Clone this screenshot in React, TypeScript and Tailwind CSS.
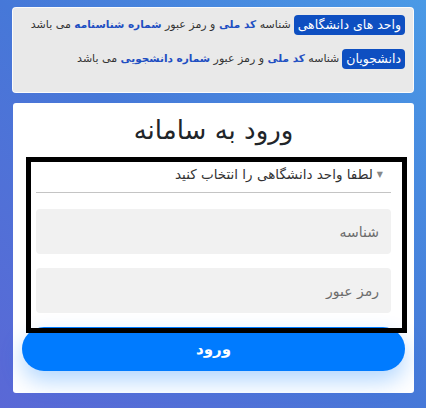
import React from "react";

const font = { fontFamily: '"DejaVu Sans", "Noto Sans", sans-serif' };

function InfoRow({ badge, children }: { badge: string; children: React.ReactNode }) {
  return (
    <div className="flex items-center gap-[3px]">
      <span className="rounded-[4px] bg-[#0e4fc1] px-[4px] h-[20px] flex items-center text-[12.5px] text-white leading-none">
        {badge}
      </span>
      <span className="text-[11px] text-[#333]">{children}</span>
    </div>
  );
}

function Hl({ children }: { children: React.ReactNode }) {
  return <b className="text-[#1f4fc2] font-bold text-[10.5px]">{children}</b>;
}

export default function App() {
  return (
    <div
      dir="rtl"
      style={font}
      className="w-[426px] h-[408px] overflow-hidden bg-gradient-to-tr from-[#5a68d6] via-[#4678d8] to-[#4a9ae6] px-[12px] pt-[7px]"
    >
      <div className="h-[86px] rounded-[4px] border border-white/80 bg-[#e9e9e9] pr-[8px] pt-[7px] flex flex-col gap-[14px]">
        <InfoRow badge="واحد های دانشگاهی">
          شناسه <Hl>کد ملی</Hl> و رمز عبور <Hl>شماره شناسنامه</Hl> می باشد
        </InfoRow>
        <InfoRow badge="دانشجویان">
          شناسه <Hl>کد ملی</Hl> و رمز عبور <Hl>شماره دانشجویی</Hl> می باشد
        </InfoRow>
      </div>

      <div className="relative mt-[10px] h-[290px] w-[401px] rounded-[3px] bg-white">
        <h1 className="h-[54px] flex items-center justify-center text-[26px] text-[#212529]">
          ورود به سامانه
        </h1>

        <div className="mx-[23px]">
          <div className="h-[36px] flex items-center gap-[4px] border-b border-[#c4c4c4] pr-[8px] text-[13.5px] text-[#333]">
            <span className="text-[8px] text-[#888]">▼</span>
            <span>لطفا واحد دانشگاهی را انتخاب کنید</span>
          </div>

          <input
            placeholder="شناسه"
            className="mt-[16px] block h-[45px] w-full rounded-[4px] bg-[#f1f1f1] px-[12px] text-[14px] text-[#333] placeholder:text-[#6c6c6c] outline-none"
          />
          <input
            placeholder="رمز عبور"
            className="mt-[14px] block h-[45px] w-full rounded-[4px] bg-[#f1f1f1] px-[12px] text-[14px] text-[#333] placeholder:text-[#6c6c6c] outline-none"
          />

          <button className="mt-[14px] mx-[-14px] w-[383px] h-[44px] rounded-full bg-[#007bff] text-white text-[15px] font-bold shadow-[0_10px_22px_rgba(0,123,255,0.3)]">
            ورود
          </button>
        </div>

        <div className="pointer-events-none absolute left-[13px] top-[54px] h-[176px] w-[381px] border-[5px] border-black" />
      </div>
    </div>
  );
}
